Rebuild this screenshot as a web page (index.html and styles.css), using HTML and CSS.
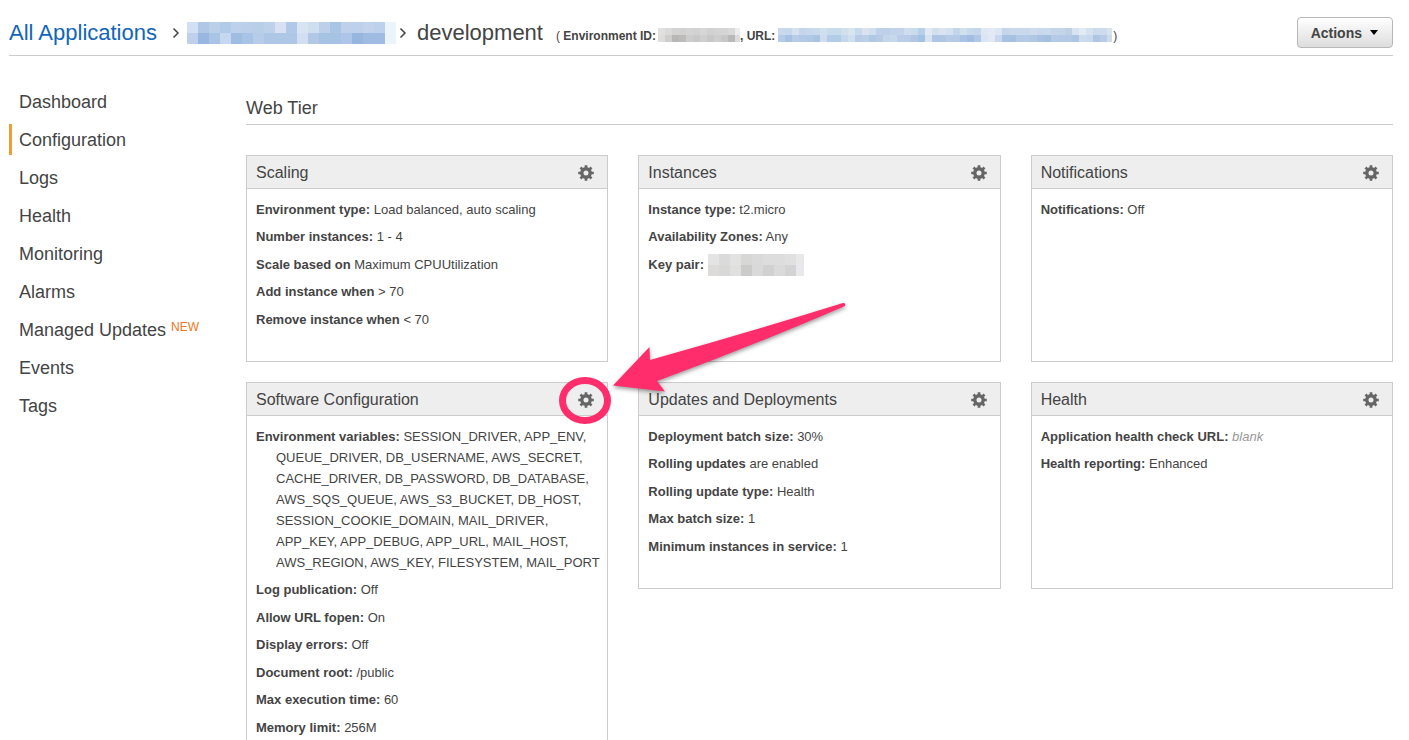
FILE: index.html
```html
<!DOCTYPE html>
<html lang="en">
<head>
<meta charset="utf-8">
<title>development - Configuration</title>
<link rel="stylesheet" href="styles.css">
</head>
<body>
<svg class="defs" aria-hidden="true">
  <symbol id="gear" viewBox="0 0 16 16">
    <circle cx="8" cy="8" r="4.200" fill="none" stroke="#666" stroke-width="3.400"/>
    <path d="M8 .2v3M8 12.800v3M.2 8h3M12.800 8h3M2.500 2.500l2.100 2.100M11.400 11.400l2.100 2.100M2.500 13.500l2.100-2.100M11.400 4.600l2.100-2.100" fill="none" stroke="#666" stroke-width="2.700"/>
  </symbol>
  <symbol id="chevron" viewBox="0 0 8 12">
    <path d="M1.500 1.500 6 6 1.500 10.500" fill="none" stroke="#444" stroke-width="1.500"/>
  </symbol>
</svg>

<header class="topbar">
  <nav class="crumbs" aria-label="Breadcrumb">
    <a class="crumb-link" href="#">All Applications</a>
    <svg class="chevron"><use href="#chevron"/></svg>
    <svg class="mosaic mosaic-app" data-cell="11" data-rows="d2e1f2 b0c8e6 bacfe8 b0cae7 bdd0ec bccfea b9cee7 bed1eb d8e0f2 b0c9e8 d9e4f3 d0dff0 bdd0ea a9c5e5 bed0ea bdd0ec c3d3ec bdd0ec ecf4fb|bed1ec 97b7e0 a9c4e5 c6d8ef 9fbce1 a8c3e5 b6cce8 afc7e7 afc7e7 afc7e7 d2def1 b2c9e6 a7c3e4 a7c3e4 adc5e6 97b6df 9fbbe1 9fbbe1 ecf4fb"></svg>
    <svg class="chevron"><use href="#chevron"/></svg>
    <h1 class="env-name">development</h1>
    <span class="env-meta">( <b>Environment ID:</b></span>
    <svg class="mosaic mosaic-id" data-cell="7" data-rows="e0e0e0 dadada d3d3d3 d1d1d1 d4d4d4 d2d2d2 d6d6d6 d1d1d1 d3d3d3 d5d5d5 d9d9d9 ededed|dfdddb d0cecc b9b7b5 bebcba cdcdcd c8c8c8 d0ced0 c8c8c8 cecece c7c7c7 b9b9b9 dcdcdc"></svg>
    <span class="env-meta"><b>, URL:</b></span>
    <svg class="mosaic mosaic-url" data-cell="7" data-rows="cad9ed c7d8ed d5e0f0 c6d5eb c8d8ec c8daeb d1e0ef c8dbec c6dced d2e0ee d9e4f1 c7d9ed dce1f1 d0dff0 bfd1ea bdd0e8 c1d2ea c2d3eb d0ddef c8dced b9cfe8 e1e9f4 d1dfef dae3f1 d5e1f0 c4d6eb d0e0ef c6d9ed c5d7ea dfe7f3 e3eaf5 dce5f2 c5d5ea cad8ec c9d8ec c9d9ed cddbed c9d8ed cadaed c7d5eb c4d5ea bdd0e6 d7e3f0 e2eaf4 d5e2f0 cbdbed cddbed d7e4ef|b6cbe7 a7c1e2 b8cce7 b1c8e6 b0c8e5 a7c4e3 cdddee b4cce8 b1cce7 c4d7ec d0dff0 b8cce7 bccfe8 b1c7e6 b7cbe7 c4d4ea c6d9ec bbcde8 bacde8 afc7e5 a2c3e4 d8e3f1 afc5e4 b0c6e5 b7cbe7 b5cae7 a8c2e3 a1bee2 b0c8e6 d9e5f3 e2e9f4 cad7ec a8c2e3 a5c0e1 b4c9e6 b5cae7 b1c8e5 a9c2e3 a4c0e1 b5cae6 b4c9e6 b2c8e5 adc5e4 cbdcef c8d9ed aec6e4 b8cce7 ccdcea"></svg>
    <span class="env-meta">)</span>
  </nav>
  <button class="actions" type="button">Actions
    <svg class="caret" viewBox="0 0 8 5"><path d="M0 0h8L4 5z"/></svg>
  </button>
</header>

<div class="layout">
  <nav class="sidebar" aria-label="Environment">
    <a class="side-link" href="#">Dashboard</a>
    <a class="side-link current" href="#" aria-current="page">Configuration</a>
    <a class="side-link" href="#">Logs</a>
    <a class="side-link" href="#">Health</a>
    <a class="side-link" href="#">Monitoring</a>
    <a class="side-link" href="#">Alarms</a>
    <a class="side-link" href="#">Managed Updates <span class="new">NEW</span></a>
    <a class="side-link" href="#">Events</a>
    <a class="side-link" href="#">Tags</a>
  </nav>

  <main class="content">
    <h2 class="section-title">Web Tier</h2>
    <div class="cards">
      <section class="card">
        <header class="card-head"><h3>Scaling</h3><button class="gear" type="button" aria-label="Edit Scaling"><svg><use href="#gear"/></svg></button></header>
        <div class="card-body">
          <p><b>Environment type:</b> Load balanced, auto scaling</p>
          <p><b>Number instances:</b> 1 - 4</p>
          <p><b>Scale based on</b> Maximum CPUUtilization</p>
          <p><b>Add instance when</b> &gt; 70</p>
          <p><b>Remove instance when</b> &lt; 70</p>
        </div>
      </section>

      <section class="card">
        <header class="card-head"><h3>Instances</h3><button class="gear" type="button" aria-label="Edit Instances"><svg><use href="#gear"/></svg></button></header>
        <div class="card-body">
          <p><b>Instance type:</b> t2.micro</p>
          <p><b>Availability Zones:</b> Any</p>
          <p class="key-pair"><b>Key pair:</b> <svg class="mosaic mosaic-key" data-cell="11" data-rows="e4e4e4 dadada e2e2e2 d7d7d5 dadada dddddd dddddd e0e0e0 e7e8ea|dcdbd9 d8d8d8 e0e0de cbcbcb d9d9d9 d1d1d1 dadada d3d3d3 e7e9ec"></svg></p>
        </div>
      </section>

      <section class="card">
        <header class="card-head"><h3>Notifications</h3><button class="gear" type="button" aria-label="Edit Notifications"><svg><use href="#gear"/></svg></button></header>
        <div class="card-body">
          <p><b>Notifications:</b> Off</p>
        </div>
      </section>

      <section class="card">
        <header class="card-head"><h3>Software Configuration</h3><button class="gear" type="button" aria-label="Edit Software Configuration"><svg><use href="#gear"/></svg></button></header>
        <div class="card-body">
          <p class="hanging"><b>Environment variables:</b> SESSION_DRIVER, APP_ENV, QUEUE_DRIVER, DB_USERNAME, AWS_SECRET, CACHE_DRIVER, DB_PASSWORD, DB_DATABASE, AWS_SQS_QUEUE, AWS_S3_BUCKET, DB_HOST, SESSION_COOKIE_DOMAIN, MAIL_DRIVER, APP_KEY, APP_DEBUG, APP_URL, MAIL_HOST, AWS_REGION, AWS_KEY, FILESYSTEM, MAIL_PORT</p>
          <p><b>Log publication:</b> Off</p>
          <p><b>Allow URL fopen:</b> On</p>
          <p><b>Display errors:</b> Off</p>
          <p><b>Document root:</b> /public</p>
          <p><b>Max execution time:</b> 60</p>
          <p><b>Memory limit:</b> 256M</p>
        </div>
        <svg class="callout" viewBox="0 0 310 150" aria-hidden="true">
          <ellipse cx="35" cy="110.500" rx="22.500" ry="20" fill="none" stroke="#ff2d6b" stroke-width="7"/>
          <path class="arrow" d="M63 95.500 99.500 57l.5 13Q200 42 293 13.100q2.500-.4 2.300 1.900-.1 1-1.300 1.600Q200 57 107 91l8 10.500z" fill="#ff2d6b"/>
        </svg>
      </section>

      <section class="card">
        <header class="card-head"><h3>Updates and Deployments</h3><button class="gear" type="button" aria-label="Edit Updates and Deployments"><svg><use href="#gear"/></svg></button></header>
        <div class="card-body">
          <p><b>Deployment batch size:</b> 30%</p>
          <p><b>Rolling updates</b> are enabled</p>
          <p><b>Rolling update type:</b> Health</p>
          <p><b>Max batch size:</b> 1</p>
          <p><b>Minimum instances in service:</b> 1</p>
        </div>
      </section>

      <section class="card">
        <header class="card-head"><h3>Health</h3><button class="gear" type="button" aria-label="Edit Health"><svg><use href="#gear"/></svg></button></header>
        <div class="card-body">
          <p><b>Application health check URL:</b> <i class="blank">blank</i></p>
          <p><b>Health reporting:</b> Enhanced</p>
        </div>
      </section>
    </div>
  </main>
</div>
<script src="mosaic.js"></script>
</body>
</html>
```
FILE: styles.css
```css
* { box-sizing: border-box; }

body {
  margin: 0;
  height: 100vh;
  overflow: hidden;
  padding: 0 16px 0 9px;
  background: #fff;
  color: #444;
  font: 13px/21px "Liberation Sans", Arial, sans-serif;
}

h1, h2, h3, p { margin: 0; font-weight: normal; }
a { text-decoration: none; }
svg { display: block; flex: none; }
.defs { position: absolute; width: 0; height: 0; }

.topbar {
  display: flex;
  justify-content: space-between;
  align-items: flex-end;
  height: 56px;
  padding-bottom: 7px;
  border-bottom: 1px solid #ccc;
}

.crumbs { display: flex; align-items: center; height: 31px; }
.crumb-link { color: #1166bb; font-size: 22px; margin-right: 15px; }
.chevron { width: 8px; height: 12px; margin-right: 7px; }
.env-name { font-size: 22px; line-height: 21px; margin: 0 13px 0 3px; }
.env-meta { font-size: 12px; line-height: 15px; padding-top: 7px; }

.mosaic { shape-rendering: crispEdges; }
.mosaic-app { width: 209px; height: 22px; margin-right: 3px; }
.mosaic-id { width: 82px; height: 14px; margin: 4px 0 0 2px; }
.mosaic-url { width: 334px; height: 14px; margin: 4px 1px 0 3px; }
.mosaic-key { width: 96px; height: 22px; }

.actions {
  display: flex;
  align-items: center;
  gap: 8px;
  height: 31px;
  padding: 0 14px 0 13px;
  border: 1px solid #b8b8b8;
  border-radius: 4px;
  background: linear-gradient(#fff, #ddd);
  color: #444;
  font: bold 14px "Liberation Sans", Arial, sans-serif;
}
.caret { width: 8px; height: 5px; fill: #000; }

.layout { display: flex; }

.sidebar {
  flex: none;
  width: 237px;
  padding-top: 30px;
  display: flex;
  flex-direction: column;
  gap: 7px;
}
.side-link {
  border-left: 3px solid transparent;
  padding: 2px 0 0 7px;
  color: #444;
  font-size: 18px;
  line-height: 29px;
}
.side-link.current { border-left-color: #f49b33; }
.new { font-size: 12px; line-height: 12px; vertical-align: 5px; color: #ee7722; }

.content { flex: 1; min-width: 0; padding-top: 37px; }
.section-title {
  font-size: 18px;
  line-height: 31px;
  border-bottom: 1px solid #ccc;
  margin-bottom: 30px;
}

.cards {
  display: grid;
  grid-template-columns: repeat(3, minmax(0, 1fr));
  grid-auto-rows: minmax(207px, auto);
  gap: 20px 30px;
  align-items: start;
}
.card { position: relative; min-height: 207px; border: 1px solid #ccc; }
.card-head {
  display: flex;
  justify-content: space-between;
  align-items: center;
  height: 33px;
  padding: 0 13px 0 9px;
  background: #eee;
  border-bottom: 1px solid #ccc;
}
.card-head h3 { font-size: 16px; line-height: 30px; padding-top: 2px; }
.gear { padding: 2px 0 0; border: 0; background: none; }
.gear svg { width: 16px; height: 16px; }

.card-body { padding: 10px 4px 10px 9px; }
.card-body p { margin-bottom: 6px; }
.card-body p:nth-child(even) { margin-bottom: 7px; }
.hanging { padding-left: 20px; text-indent: -20px; }
.key-pair { display: flex; align-items: center; gap: 4px; height: 21px; }
.blank { color: #999; }

.callout {
  position: absolute;
  z-index: 2;
  top: -93px;
  right: -253px;
  width: 310px;
  height: 150px;
  pointer-events: none;
}
.arrow { filter: drop-shadow(0 2px 2px rgba(0, 0, 0, 0.4)); }
```
FILE: mosaic.js
```js
// Fills each redaction mosaic with square cells, one colour per cell.
document.querySelectorAll("svg.mosaic").forEach(function (svg) {
  var cell = Number(svg.dataset.cell);
  svg.dataset.rows.split("|").forEach(function (row, y) {
    row.split(" ").forEach(function (color, x) {
      var rect = document.createElementNS("http://www.w3.org/2000/svg", "rect");
      rect.setAttribute("x", x * cell);
      rect.setAttribute("y", y * cell);
      rect.setAttribute("width", cell);
      rect.setAttribute("height", cell);
      rect.setAttribute("fill", "#" + color);
      svg.appendChild(rect);
    });
  });
});
```
